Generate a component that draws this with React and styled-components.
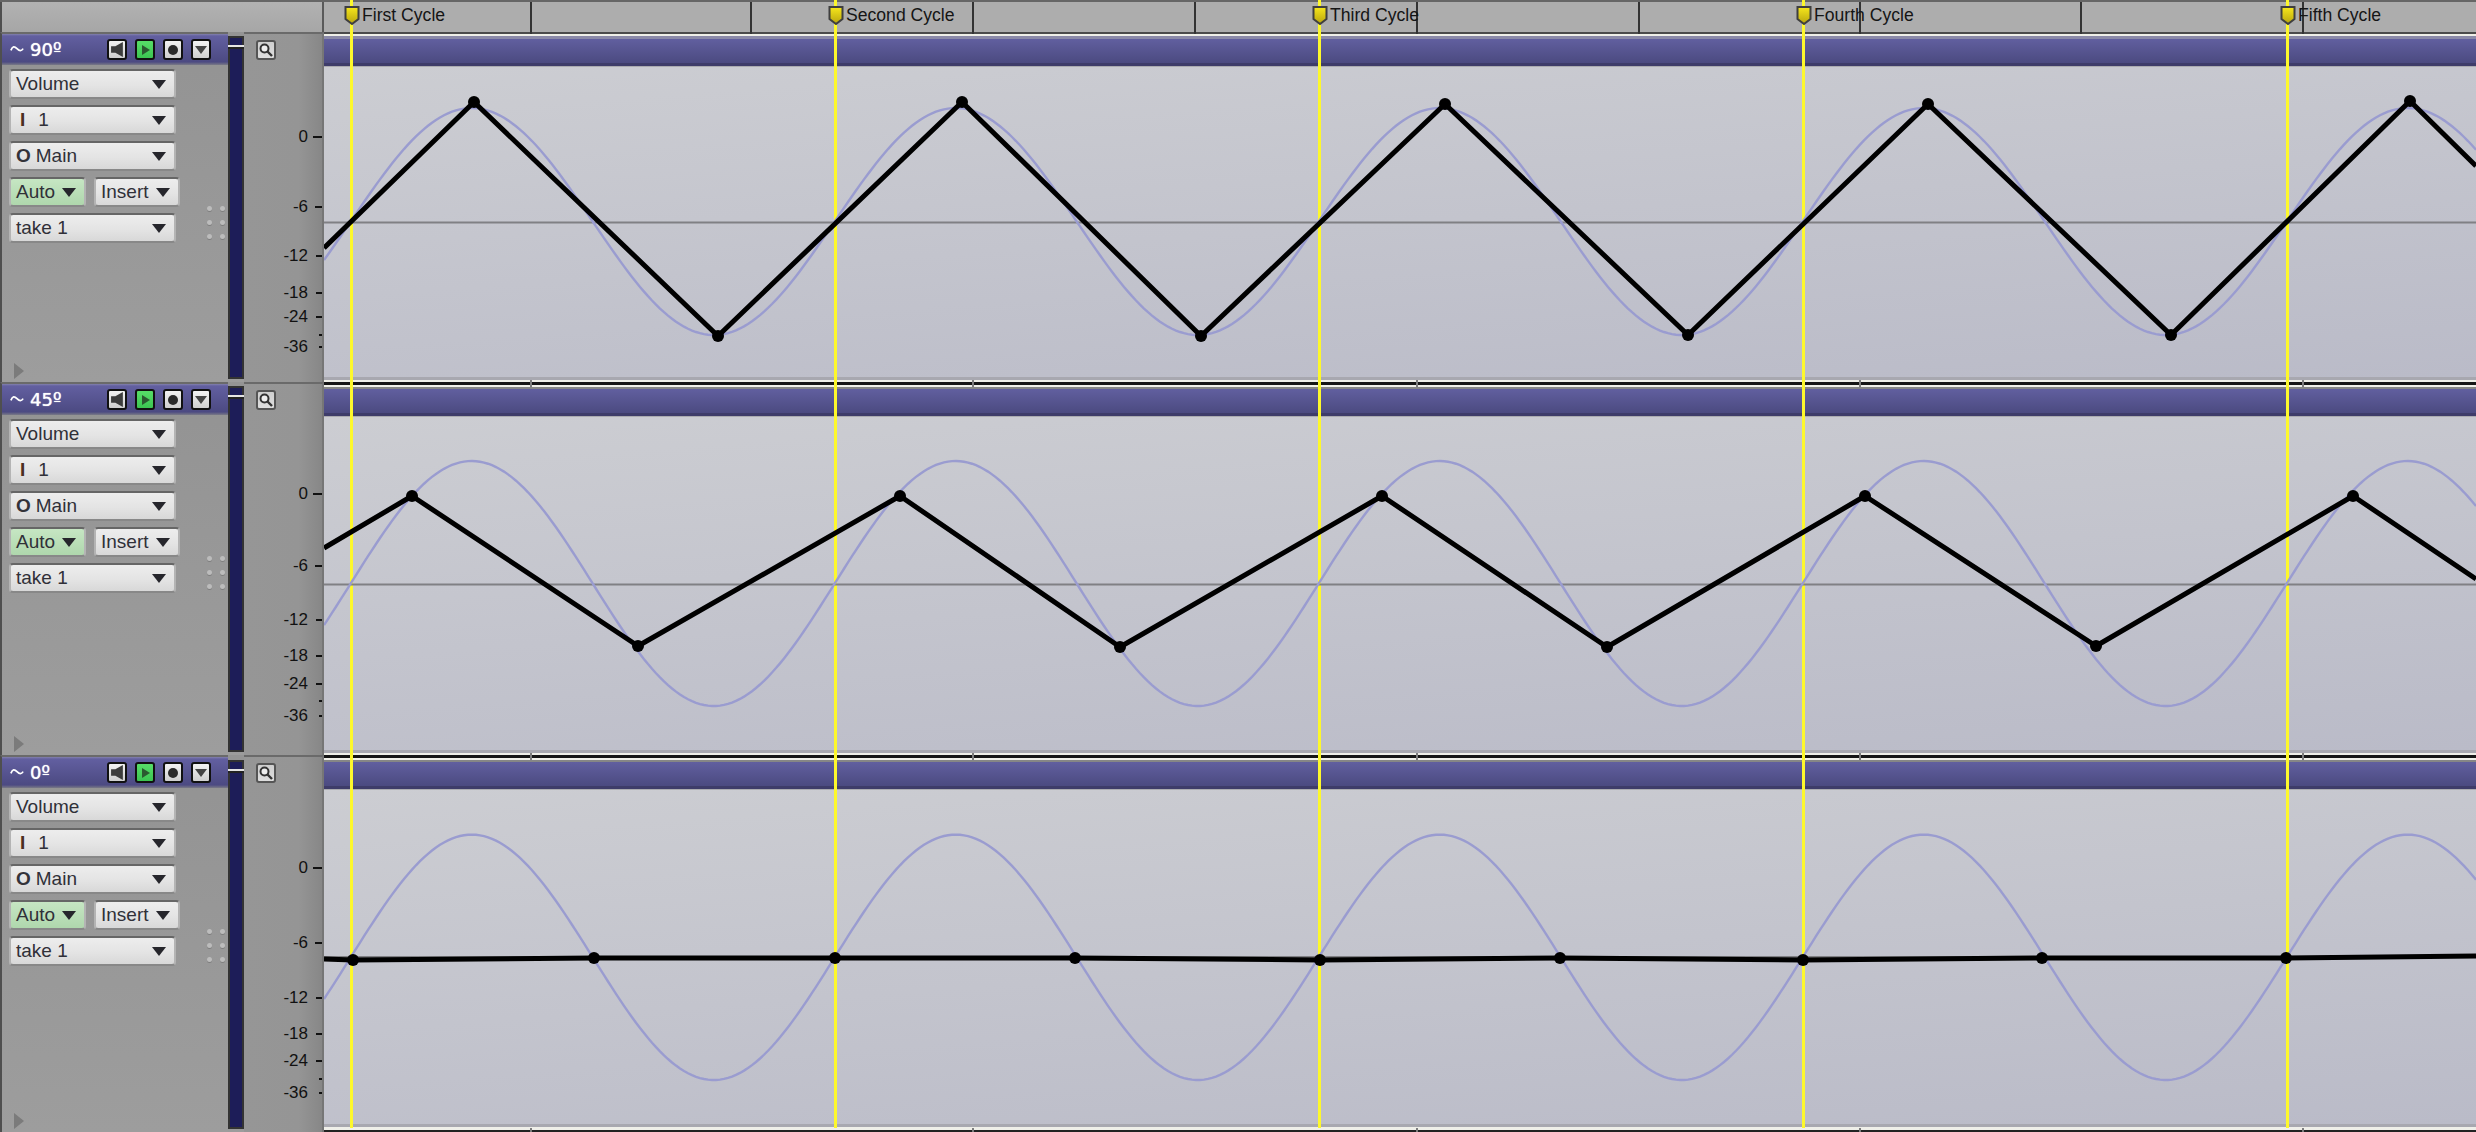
import React from 'react';
import styled, { createGlobalStyle } from 'styled-components';

const MARKERS = [
  { x: 350, name: 'First Cycle' },
  { x: 834, name: 'Second Cycle' },
  { x: 1318, name: 'Third Cycle' },
  { x: 1802, name: 'Fourth Cycle' },
  { x: 2286, name: 'Fifth Cycle' },
];
const RULER_TICKS = [530, 750, 972, 1194, 1416, 1638, 1859, 2080, 2302];
const BAR_TICKS = [530, 972, 1416, 1859, 2302];
const LANE_X = 324;
const LANE_W = 2152;

// all y values below are page coordinates, the lane svg viewBox maps them
const TRACKS = [
  {
    title: '90º',
    top: 32,
    height: 350,
    foot: 5,
    center: 221.5,
    amp: 113.5,
    guide: 222.5,
    scale: [[0, 137, 9], [-6, 207, 7], [-12, 256, 6], [-18, 293, 6], [-24, 317, 6], [null, 335, 3], [-36, 347, 3]],
    points: [[324, 248], [474, 102], [718, 336], [962, 102], [1201, 336], [1445, 104], [1688, 335], [1928, 104], [2171, 335], [2410, 101], [2476, 166]],
  },
  {
    title: '45º',
    top: 382,
    height: 373,
    foot: 5,
    center: 583.5,
    amp: 122.5,
    guide: 584.5,
    scale: [[0, 494, 9], [-6, 566, 7], [-12, 620, 6], [-18, 656, 6], [-24, 684, 6], [null, 701, 3], [-36, 716, 3]],
    points: [[324, 548], [412, 496], [638, 646], [900, 496], [1120, 647], [1382, 496], [1607, 647], [1865, 496], [2096, 646], [2353, 496], [2476, 579]],
  },
  {
    title: '0º',
    top: 755,
    height: 377,
    foot: 8,
    center: 957.3,
    amp: 122.7,
    guide: 957,
    scale: [[0, 868, 9], [-6, 943, 7], [-12, 998, 6], [-18, 1034, 6], [-24, 1061, 6], [null, 1079, 3], [-36, 1093, 3]],
    points: [[324, 959], [353, 960], [594, 958], [835, 958], [1075, 958], [1320, 960], [1560, 958], [1803, 960], [2042, 958], [2286, 958], [2476, 956]],
  },
];

const sinePath = (center, amp) => {
  let d = '';
  for (let x = LANE_X; x <= LANE_X + LANE_W; x += 4) {
    const y = center - amp * Math.sin(((x - 350.7) / 484) * Math.PI * 2);
    d += `${d ? 'L' : 'M'}${x} ${y.toFixed(2)}`;
  }
  return d;
};

const GlobalStyle = createGlobalStyle`
  html, body {
    margin: 0;
    padding: 0;
    background: #999;
  }
  body {
    font-family: "Liberation Sans", Arial, sans-serif;
  }
`;

const Page = styled.div`
  position: relative;
  width: 2476px;
  height: 1132px;
  overflow: hidden;
  display: flex;
  flex-direction: column;
`;

const RulerRow = styled.div`
  display: flex;
  height: 32px;
  flex: none;
  border-top: 2px solid #666;
  box-sizing: border-box;
`;

const RulerCorner = styled.div`
  width: 324px;
  flex: none;
  box-sizing: border-box;
  border-left: 2px solid #4f4f4f;
  border-right: 2px solid #5a5a5a;
  background: linear-gradient(180deg, #b2b2b2, #a6a6a6);
`;

const RulerStrip = styled.div`
  flex: 1;
  background: #adadad;
`;

const RulerTick = styled.div`
  position: absolute;
  top: 2px;
  left: ${(p) => p.$x}px;
  width: 2px;
  height: 32px;
  background: #333;
  z-index: 2;
`;

const MarkerLine = styled.div`
  position: absolute;
  top: 0;
  left: ${(p) => p.$x}px;
  width: 3px;
  height: 1128px;
  background: #fdf82c;
  z-index: 1;
`;

const MarkerFlag = styled.svg`
  position: absolute;
  top: 6px;
  left: ${(p) => p.$x - 6}px;
  z-index: 3;
`;

const MarkerName = styled.span`
  position: absolute;
  top: 4px;
  left: ${(p) => p.$x + 12}px;
  font-size: 17.6px;
  line-height: 22px;
  color: #151515;
  white-space: nowrap;
  z-index: 3;
`;

const TrackRow = styled.div`
  display: flex;
  flex: none;
  height: ${(p) => p.$height}px;
`;

const ControlPanel = styled.div`
  width: 228px;
  flex: none;
  box-sizing: border-box;
  display: flex;
  flex-direction: column;
  border-left: 2px solid #4f4f4f;
  border-top: 2px solid #6a6a6a;
  background: linear-gradient(180deg, #939393, #9d9d9d);
`;

const TrackHeader = styled.div`
  height: 31px;
  flex: none;
  box-sizing: border-box;
  display: flex;
  align-items: center;
  padding-left: 8px;
  background: linear-gradient(180deg, #8381ad 0, #625fa0 2px, #4c4a82 90%, #7a7a86 100%);
`;

const WaveIcon = styled.svg`
  flex: none;
  margin-top: -1px;
`;

const TrackTitle = styled.span`
  width: 77px;
  margin-left: 6px;
  font-family: "DejaVu Sans", sans-serif;
  font-size: 18px;
  color: #fff;
  text-shadow: 0 0 1px #fff;
`;

const TransportButtons = styled.div`
  display: flex;
  gap: 8px;
`;

const TransportButton = styled.div`
  width: 20px;
  height: 21px;
  box-sizing: border-box;
  display: flex;
  align-items: center;
  justify-content: center;
  border: 2px solid #111;
  border-radius: 3px;
  background: ${(p) =>
    p.$active
      ? 'linear-gradient(180deg, #57de68, #3cc552)'
      : 'linear-gradient(180deg, #f2f2f2, #cfcfcf)'};
`;

const ControlsArea = styled.div`
  display: flex;
  padding: 4px 0 0 7px;
`;

const ControlStack = styled.div`
  display: flex;
  flex-direction: column;
  gap: 6px;
  width: 172px;
  flex: none;
`;

const ButtonRow = styled.div`
  display: flex;
  gap: 8px;
`;

const Select = styled.div`
  width: ${(p) => p.$width}px;
  height: 30px;
  box-sizing: border-box;
  flex: none;
  display: flex;
  align-items: center;
  justify-content: space-between;
  padding: 0 ${(p) => p.$arrowGap}px 0 5px;
  border: 2px solid #b4b4b4;
  border-top-color: #666;
  border-bottom-color: #888;
  border-radius: 4px;
  font-size: 19px;
  color: #303038;
  white-space: nowrap;
  background: ${(p) =>
    p.$green
      ? 'linear-gradient(180deg, #c6e6c3, #afd7ad)'
      : 'linear-gradient(180deg, #ededed, #e4e4e4 55%, #d8d8d8)'};
`;

const IoLetter = styled.b`
  color: ${(p) => (p.$input ? '#4a3020' : '#33333a')};
  margin: ${(p) => (p.$input ? '0 13px 0 4px' : '0 5px 0 0')};
`;

const Arrow = styled.svg`
  flex: none;
`;

const Grip = styled.div`
  display: grid;
  grid-template-columns: repeat(2, 5px);
  grid-auto-rows: 5px;
  column-gap: 8px;
  row-gap: 9px;
  margin: 137px 0 0 26px;
  align-self: flex-start;
`;

const GripDot = styled.span`
  border-radius: 50%;
  background: #bcbcbc;
  box-shadow: 0 1px 0 #7e7e7e;
`;

const ExpandArrow = styled.div`
  margin: auto 0 3px 12px;
  width: 0;
  height: 0;
  border-left: 10px solid #7b7b7b;
  border-top: 8px solid transparent;
  border-bottom: 8px solid transparent;
`;

const Meter = styled.div`
  width: 16px;
  flex: none;
  box-sizing: border-box;
  display: flex;
  flex-direction: column;
  padding: ${(p) => p.$padTop}px 0 3px;
  background: linear-gradient(180deg, #949494, #9c9c9c);
`;

const MeterCap = styled.div`
  height: 9px;
  box-sizing: border-box;
  background: #1d1d58;
  border: 2px solid #333;
  border-bottom: none;
`;

const MeterGap = styled.div`
  height: 4px;
  background: linear-gradient(180deg, #e4e4e4 0 2px, #222 2px);
`;

const MeterBar = styled.div`
  flex: 1;
  background: #1d1d58;
  border: 2px solid #333;
  border-top: none;
`;

const ScalePanel = styled.div`
  position: relative;
  width: 80px;
  flex: none;
  box-sizing: border-box;
  padding: 6px 0 0 12px;
  border-right: 2px solid #767676;
  border-top: 2px solid #6a6a6a;
  background: linear-gradient(90deg, #969696 0, #959595 70%, #878787 100%);
`;

const ZoomButton = styled.div`
  width: 20px;
  height: 20px;
  box-sizing: border-box;
  display: flex;
  align-items: center;
  justify-content: center;
  border: 2px solid #555;
  border-radius: 3px;
  background: linear-gradient(180deg, #cfcfcf, #dedede);
`;

const ScaleLabel = styled.span`
  position: absolute;
  top: ${(p) => p.$y - 10}px;
  right: 14px;
  font-size: 17px;
  line-height: 20px;
  color: #111;
`;

const ScaleTick = styled.span`
  position: absolute;
  top: ${(p) => p.$y - 1}px;
  right: 0;
  width: ${(p) => p.$width}px;
  height: 2px;
  background: #111;
`;

const LaneColumn = styled.div`
  position: relative;
  flex: 1;
  display: flex;
  flex-direction: column;
  min-width: 0;
`;

const LaneEdge = styled.div`
  height: 7px;
  flex: none;
  background: ${(p) =>
    p.$first
      ? 'linear-gradient(180deg, #4b4b4b 0 2px, #efefe8 2px 4px, #8b8aa8 4px)'
      : 'linear-gradient(180deg, #151515 0 3px, #f0f0ea 3px 5px, #868686 5px)'};
`;

const BarTick = styled.div`
  position: absolute;
  left: ${(p) => p.$x - LANE_X}px;
  ${(p) => (p.$bottom ? 'bottom: 0; height: 4px;' : 'top: -2px; height: 7px;')}
  width: 2px;
  background: #7d7d7d;
`;

const NameBand = styled.div`
  height: 28px;
  flex: none;
  box-sizing: border-box;
  border-bottom: 1px solid #ababb0;
  background: linear-gradient(180deg, #615f9f 0, #4b4a80 90%, #3e3c69 90%, #3e3c69 100%);
`;

const LaneBody = styled.div`
  flex: 1;
  min-height: 0;
  background: linear-gradient(176deg, #cccdd2, #babbc8);
`;

const CurveSvg = styled.svg`
  display: block;
  position: relative;
  z-index: 2;
`;

const LaneFoot = styled.div`
  height: ${(p) => p.$height}px;
  flex: none;
  background: ${(p) =>
    p.$height > 5
      ? 'linear-gradient(180deg, #a8a8b0 0 3px, #efefe9 3px 6px, #222 6px)'
      : 'linear-gradient(180deg, #a8a8b0 0 3px, #efefe9 3px)'};
`;

const SpeakerGlyph = () => (
  <svg width="13" height="15" viewBox="0 0 12 14">
    <path d="M0 4h4l7-4v14l-7-4H0z" fill="#3c3c3c" />
  </svg>
);
const PlayGlyph = () => (
  <svg width="9" height="10" viewBox="0 0 9 10">
    <path d="M1 0l8 5-8 5z" fill="#2b5a30" />
  </svg>
);
const RecordGlyph = () => (
  <svg width="10" height="10" viewBox="0 0 10 10">
    <circle cx="5" cy="5" r="5" fill="#2a2a2a" />
  </svg>
);
const MenuGlyph = () => (
  <svg width="12" height="8" viewBox="0 0 12 8">
    <path d="M0 0h12L6 8z" fill="#444" />
  </svg>
);
const MagnifierGlyph = () => (
  <svg width="14" height="14" viewBox="0 0 14 14">
    <circle cx="5.5" cy="5.5" r="4" fill="#eee" stroke="#333" strokeWidth="2" />
    <path d="M8.5 8.5L13 13" stroke="#333" strokeWidth="2.4" />
  </svg>
);

const SelectArrow = () => (
  <Arrow width="14" height="9" viewBox="0 0 14 9">
    <path d="M0 0h14L7 9z" fill="#26262c" />
  </Arrow>
);

const Lane = ({ track }) => {
  const laneTop = track.top + 35;
  const laneHeight = track.height - 35 - track.foot;
  return (
    <LaneBody>
      <CurveSvg
        width={LANE_W}
        height={laneHeight}
        viewBox={`${LANE_X} ${laneTop} ${LANE_W} ${laneHeight}`}
      >
        <line x1={LANE_X} x2={LANE_X + LANE_W} y1={track.guide} y2={track.guide} stroke="#808084" strokeWidth="2" />
        <path d={sinePath(track.center, track.amp)} fill="none" stroke="#9a9cd0" strokeWidth="2.4" />
        <polyline
          points={track.points.map((pt) => pt.join(',')).join(' ')}
          fill="none"
          stroke="#000"
          strokeWidth="5"
          strokeLinejoin="round"
        />
        {track.points.slice(0, -1).map(([x, y]) =>
          x > LANE_X ? <circle key={x} cx={x} cy={y} r="6" fill="#000" /> : null
        )}
      </CurveSvg>
    </LaneBody>
  );
};

const Track = ({ track, index }) => (
  <TrackRow $height={track.height}>
    <ControlPanel>
      <TrackHeader>
        <WaveIcon width="14" height="9" viewBox="0 0 16 10">
          <path d="M1 6C3 1 5 1 8 4s5 3 7 0" fill="none" stroke="#fff" strokeWidth="2" />
        </WaveIcon>
        <TrackTitle>{track.title}</TrackTitle>
        <TransportButtons>
          <TransportButton><SpeakerGlyph /></TransportButton>
          <TransportButton $active><PlayGlyph /></TransportButton>
          <TransportButton><RecordGlyph /></TransportButton>
          <TransportButton><MenuGlyph /></TransportButton>
        </TransportButtons>
      </TrackHeader>
      <ControlsArea>
        <ControlStack>
          <Select $width={167} $arrowGap={8}>
            <span>Volume</span>
            <SelectArrow />
          </Select>
          <Select $width={167} $arrowGap={8}>
            <span><IoLetter $input>I</IoLetter>1</span>
            <SelectArrow />
          </Select>
          <Select $width={167} $arrowGap={8}>
            <span><IoLetter>O</IoLetter>Main</span>
            <SelectArrow />
          </Select>
          <ButtonRow>
            <Select $width={77} $arrowGap={8} $green>
              <span>Auto</span>
              <SelectArrow />
            </Select>
            <Select $width={86} $arrowGap={8}>
              <span>Insert</span>
              <SelectArrow />
            </Select>
          </ButtonRow>
          <Select $width={167} $arrowGap={8}>
            <span>take 1</span>
            <SelectArrow />
          </Select>
        </ControlStack>
        <Grip>
          {[0, 1, 2, 3, 4, 5].map((n) => <GripDot key={n} />)}
        </Grip>
      </ControlsArea>
      <ExpandArrow />
    </ControlPanel>
    <Meter $padTop={index === 2 ? 5 : 4}>
      <MeterCap />
      <MeterGap />
      <MeterBar />
    </Meter>
    <ScalePanel>
      <ZoomButton><MagnifierGlyph /></ZoomButton>
      {track.scale.map(([label, y, tick]) => (
        <React.Fragment key={y}>
          {label !== null && <ScaleLabel $y={y - track.top - 2}>{label}</ScaleLabel>}
          <ScaleTick $y={y - track.top - 2} $width={tick} />
        </React.Fragment>
      ))}
    </ScalePanel>
    <LaneColumn>
      <LaneEdge $first={index === 0} />
      {index > 0 && BAR_TICKS.map((x) => <BarTick key={x} $x={x} />)}
      <NameBand />
      <Lane track={track} />
      <LaneFoot $height={track.foot} />
      {index === 2 && BAR_TICKS.map((x) => <BarTick key={x} $x={x} $bottom />)}
    </LaneColumn>
  </TrackRow>
);

const App = () => (
  <Page>
    <GlobalStyle />
    <RulerRow>
      <RulerCorner />
      <RulerStrip />
    </RulerRow>
    {RULER_TICKS.map((x) => <RulerTick key={x} $x={x} />)}
    {MARKERS.map((m) => (
      <React.Fragment key={m.x}>
        <MarkerLine $x={m.x} />
        <MarkerFlag $x={m.x} width="16" height="19" viewBox="0 0 16 19">
          <defs>
            <linearGradient id={`flag${m.x}`} x1="0" y1="0" x2="0" y2="1">
              <stop offset="0" stopColor="#f7e71c" />
              <stop offset="1" stopColor="#b7a40e" />
            </linearGradient>
          </defs>
          <path d="M1.5 1h13v12l-6.5 5-6.5-5z" fill={`url(#flag${m.x})`} stroke="#3f3f3f" strokeWidth="2" />
        </MarkerFlag>
        <MarkerName $x={m.x}>{m.name}</MarkerName>
      </React.Fragment>
    ))}
    {TRACKS.map((track, i) => <Track key={track.title} track={track} index={i} />)}
  </Page>
);

export default App;
